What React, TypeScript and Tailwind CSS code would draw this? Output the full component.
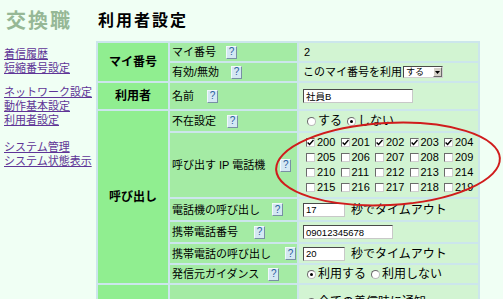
import type { ReactNode } from 'react';

const LINK_GROUPS = [
  { gap: '', links: ['着信履歴', '短縮番号設定'] },
  { gap: 'mt-[10px]', links: ['ネットワーク設定', '動作基本設定', '利用者設定'] },
  { gap: 'mt-[13px]', links: ['システム管理', 'システム状態表示'] },
];

const PHONES = Array.from({ length: 20 }, (_, i) => 200 + i);

const cat = 'bg-[#90ee90] p-0 text-center align-middle text-[12px] font-bold leading-[14px]';
const val = 'bg-[#d2f4d2] p-0 pl-[4px] align-middle text-[11px] leading-[14px]';

function Help({ className = '' }: { className?: string }) {
  return (
    <span
      className={`inline-flex h-[13px] w-[11px] shrink-0 items-center justify-center border border-t-[#f2f8fc] border-l-[#f2f8fc] border-r-[#7890a4] border-b-[#7890a4] bg-[#d4e8f3] text-[10px] leading-none text-[#2b5c9c] ${className}`}
    >
      ?
    </span>
  );
}

function Label({ children, help }: { children: ReactNode; help: string }) {
  return (
    <td className="bg-[#a4eba4] p-0 pl-[2px] align-middle">
      <div className="flex items-center text-[11px] leading-[14px]">
        <span className="whitespace-nowrap">{children}</span>
        <Help className={help} />
      </div>
    </td>
  );
}

function Check({ on }: { on: boolean }) {
  return (
    <span className="inline-flex h-[9px] w-[9px] shrink-0 items-center justify-center border border-t-[#6b6b6b] border-l-[#6b6b6b] border-r-[#cfcfcf] border-b-[#cfcfcf] bg-white">
      {on && (
        <svg width="7" height="7" viewBox="0 0 7 7">
          <path d="M0.6 3.4 L2.6 5.5 L6.5 1" fill="none" stroke="#000" strokeWidth="1.4" />
        </svg>
      )}
    </span>
  );
}

function Radio({ on }: { on: boolean }) {
  return (
    <span className="inline-flex h-[9px] w-[9px] shrink-0 items-center justify-center rounded-full border border-t-[#6b6b6b] border-l-[#6b6b6b] border-r-[#b8b8b8] border-b-[#b8b8b8] bg-white">
      {on && <span className="h-[3px] w-[3px] rounded-full bg-black" />}
    </span>
  );
}

function TextBox({ value, width }: { value: string; width: string }) {
  return (
    <input
      readOnly
      value={value}
      className={`h-[14px] ${width} border border-t-[#4a4a4a] border-l-[#4a4a4a] border-r-[#c8c8c8] border-b-[#c8c8c8] bg-white pl-[2px] text-[9.5px] leading-none text-black outline-none`}
    />
  );
}

function Choice({ options, selected }: { options: string[]; selected: number }) {
  return (
    <div className="flex items-center text-[12px] leading-[14px]">
      {options.map((o, i) => (
        <span key={o} className={`flex items-center ${i > 0 ? 'ml-[5px]' : ''}`}>
          <Radio on={i === selected} />
          <span className="ml-[2px]">{o}</span>
        </span>
      ))}
    </div>
  );
}

export default function App() {
  return (
    <div className="relative h-[299px] w-[503px] overflow-hidden bg-[#f0fff4] font-['Liberation_Sans','Noto_Sans_CJK_JP',sans-serif] text-black">
      <div className="flex">
        <aside className="w-[96px] shrink-0 pl-[4px] pt-[11px]">
          <div className="pl-[2px] text-[20px] font-bold leading-[20px] tracking-[2px] text-[#96b896]">交換職</div>
          <nav className="mt-[16px] text-[11px] leading-[14px]">
            {LINK_GROUPS.map((g) => (
              <div key={g.links[0]} className={`flex flex-col ${g.gap}`}>
                {g.links.map((l) => (
                  <a key={l} href="#" className="whitespace-nowrap text-[#5f3597] underline">
                    {l}
                  </a>
                ))}
              </div>
            ))}
          </nav>
        </aside>

        <main className="flex-1">
          <h1 className="pl-[2px] pt-[12px] text-[16px] font-bold leading-[17px] tracking-[2px]">利用者設定</h1>
          <table className="mt-[12px] w-[384px] table-fixed border-separate border-spacing-[2px] bg-[#cce6ec]">
            <colgroup>
              <col className="w-[70px]" />
              <col className="w-[127px]" />
              <col className="w-[179px]" />
            </colgroup>
            <tbody>
              <tr className="h-[18px]">
                <td rowSpan={2} className={cat}>マイ番号</td>
                <Label help="ml-[10px]">マイ番号</Label>
                <td className={val}><span className="pl-[1px]">2</span></td>
              </tr>
              <tr className="h-[18px]">
                <Label help="ml-[12px]">有効/無効</Label>
                <td className={val}>
                  <div className="flex items-center">
                    <span>このマイ番号を利用</span>
                    <span className="ml-[1px] flex h-[12px] w-[40px] items-center border border-t-[#4a4a4a] border-l-[#4a4a4a] border-r-[#d0d0d0] border-b-[#d0d0d0] bg-white">
                      <span className="flex-1 pl-[2px] text-[9px] leading-none">する</span>
                      <span className="flex h-full w-[9px] items-center justify-center border border-t-white border-l-white border-r-[#6b6b6b] border-b-[#6b6b6b] bg-[#d4d0c8]">
                        <svg width="5" height="3" viewBox="0 0 5 3"><path d="M0 0 H5 L2.5 3 Z" fill="#000" /></svg>
                      </span>
                    </span>
                  </div>
                </td>
              </tr>

              <tr className="h-[26px]">
                <td className={cat}>利用者</td>
                <Label help="ml-[13px]">名前</Label>
                <td className={val}><TextBox value="社員B" width="w-[110px]" /></td>
              </tr>

              <tr className="h-[20px]">
                <td rowSpan={6} className={cat}>呼び出し</td>
                <Label help="ml-[11px]">不在設定</Label>
                <td className={`${val} pl-[8px]`}><Choice options={['する', 'しない']} selected={1} /></td>
              </tr>
              <tr className="h-[64px]">
                <Label help="ml-[15px]">呼び出す IP 電話機</Label>
                <td className={`${val} pl-[7px]`}>
                  <div className="grid grid-cols-[repeat(5,34.5px)] text-[11px] leading-[15px]">
                    {PHONES.map((n) => (
                      <span key={n} className="flex items-center">
                        <Check on={n < 205} />
                        <span className="ml-[2px]">{n}</span>
                      </span>
                    ))}
                  </div>
                </td>
              </tr>
              <tr className="h-[21px]">
                <Label help="ml-[12px]">電話機の呼び出し</Label>
                <td className={val}>
                  <div className="flex items-center">
                    <TextBox value="17" width="w-[42px]" />
                    <span className="ml-[6px] text-[12px]">秒でタイムアウト</span>
                  </div>
                </td>
              </tr>
              <tr className="h-[20px]">
                <Label help="ml-[16px]">携帯電話番号</Label>
                <td className={val}><TextBox value="09012345678" width="w-[90px]" /></td>
              </tr>
              <tr className="h-[19px]">
                <Label help="ml-[14px]">携帯電話の呼び出し</Label>
                <td className={val}>
                  <div className="flex items-center">
                    <TextBox value="20" width="w-[42px]" />
                    <span className="ml-[6px] text-[12px]">秒でタイムアウト</span>
                  </div>
                </td>
              </tr>
              <tr className="h-[18px]">
                <Label help="ml-[9px]">発信元ガイダンス</Label>
                <td className={`${val} pl-[8px]`}><Choice options={['利用する', '利用しない']} selected={0} /></td>
              </tr>

              <tr className="h-[40px]">
                <td className={cat} />
                <td className="bg-[#a4eba4] p-0" />
                <td className={`${val} pl-[8px] pt-[10px] align-top`}>
                  <Choice options={['全ての着信時に通知']} selected={-1} />
                </td>
              </tr>
            </tbody>
          </table>
        </main>
      </div>

      <svg className="pointer-events-none absolute left-0 top-0" width="503" height="299">
        <ellipse cx="388" cy="164" rx="112" ry="41" transform="rotate(-3 388 164)" fill="none" stroke="#d01c1c" strokeWidth="2" />
      </svg>
    </div>
  );
}
